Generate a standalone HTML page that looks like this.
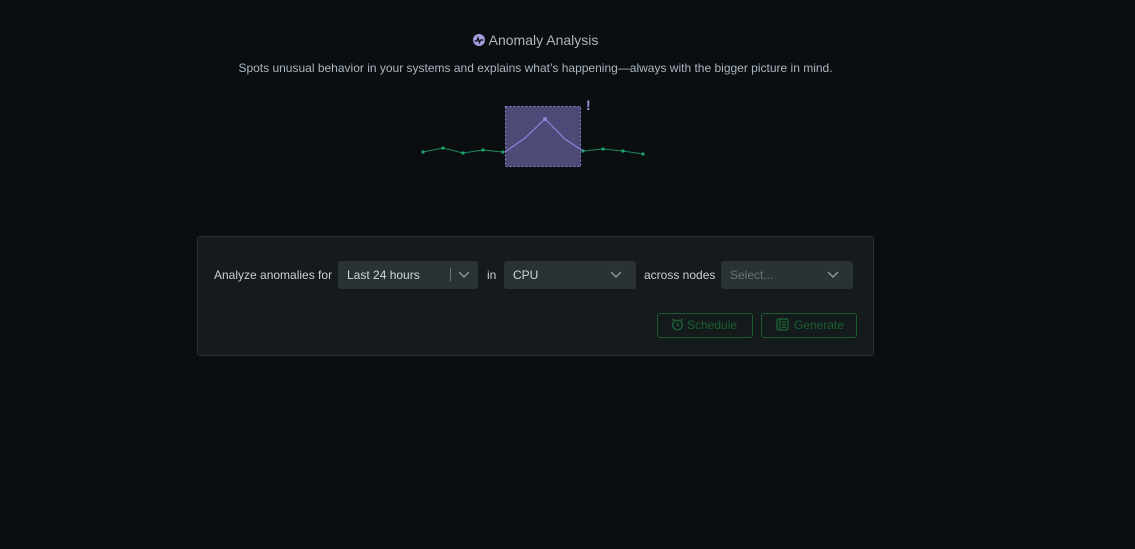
<!DOCTYPE html>
<html><head><style>
body{margin:0;width:1135px;height:549px;background:#0b0e10;font-family:"Liberation Sans",sans-serif;position:relative;overflow:hidden;color:#c5ced6}
.t{position:absolute;left:0;width:1071px;text-align:center}
.panel{position:absolute;left:197px;top:236px;width:675px;height:118px;background:#151a1c;border:1px solid #2a3032;border-radius:3px}
.sel{position:absolute;top:261px;height:28px;background:#2a3234;border-radius:3px;font-size:12px;line-height:28px;color:#d0d7dc;box-sizing:border-box;padding-left:9px}
.lbl{position:absolute;top:261px;line-height:28px;font-size:12px;color:#c8d0d6}
.btn{position:absolute;top:313px;height:25px;border:1px solid #1d5a30;border-radius:3px;box-sizing:border-box;color:#1e6a36;font-size:12px;line-height:23px}
</style></head><body>
<div class="t" style="top:32px;font-size:14px;color:#a9b5bf">
<svg width="12" height="12" viewBox="0 0 12 12" style="vertical-align:-1px;margin-right:4px"><circle cx="6" cy="6" r="6" fill="#a79ee0"/><path d="M1.5 7 H4 L5 4 L6.5 8.5 L7.5 6 H10.5" stroke="#0b0e10" stroke-width="1.3" fill="none"/></svg>Anomaly Analysis</div>
<div class="t" style="top:61px;font-size:12px;color:#a9b5bf">Spots unusual behavior in your systems and explains what’s happening—always with the bigger picture in mind.</div>
<svg style="position:absolute;left:0;top:0" width="1135" height="200">
<rect x="505.5" y="106.5" width="75" height="60" fill="#4e4a78" stroke="#8d86d0" stroke-dasharray="2 2"/>
<polyline points="423,152 443,148 463,153 483,150 503,152" fill="none" stroke="#1e8a5c" stroke-width="1"/>
<polyline points="583,151 603,149 623,151 643,154" fill="none" stroke="#1e8a5c" stroke-width="1"/>
<g fill="#22a36b"><circle cx="423" cy="152" r="1.6"/><circle cx="443" cy="148" r="1.6"/><circle cx="463" cy="153" r="1.6"/><circle cx="483" cy="150" r="1.6"/><circle cx="503" cy="152" r="1.6"/><circle cx="583" cy="151" r="1.6"/><circle cx="603" cy="149" r="1.6"/><circle cx="623" cy="151" r="1.6"/><circle cx="643" cy="154" r="1.6"/></g>
<polyline points="505,152 525,138 545,119 565,139 583,151" fill="none" stroke="#8c84d6" stroke-width="1.2"/>
<circle cx="545" cy="119" r="2" fill="#8c84d6"/>
<text x="586" y="110" font-size="14" font-weight="bold" fill="#9d95e0" font-family="Liberation Sans">!</text>
</svg>
<div class="panel"></div>
<div class="lbl" style="left:214px">Analyze anomalies for</div>
<div class="sel" style="left:338px;width:140px">Last 24 hours<span style="position:absolute;left:112px;top:7px;width:1px;height:13px;background:#6a7478"></span><svg style="position:absolute;right:8px;top:10px" width="12" height="8"><path d="M1 1 L6 6 L11 1" stroke="#8a9499" stroke-width="1.5" fill="none"/></svg></div>
<div class="lbl" style="left:487px">in</div>
<div class="sel" style="left:504px;width:132px">CPU<svg style="position:absolute;right:14px;top:10px" width="12" height="8"><path d="M1 1 L6 6 L11 1" stroke="#8a9499" stroke-width="1.5" fill="none"/></svg></div>
<div class="lbl" style="left:644px">across nodes</div>
<div class="sel" style="left:721px;width:132px;color:#6a7478">Select...<svg style="position:absolute;right:14px;top:10px" width="12" height="8"><path d="M1 1 L6 6 L11 1" stroke="#8a9499" stroke-width="1.5" fill="none"/></svg></div>
<div class="btn" style="left:657px;width:96px;padding-left:13px;color:#1b6030"><svg width="13" height="13" viewBox="0 0 13 13" style="vertical-align:-2px;margin-right:3px"><circle cx="6.5" cy="7" r="4.8" stroke="#1e6a36" stroke-width="1.2" fill="none"/><path d="M6.5 4.5V7L8 8.3M1 2.5L3 1M12 2.5L10 1" stroke="#1e6a36" stroke-width="1.2" fill="none"/></svg>Schedule</div>
<div class="btn" style="left:761px;width:96px;padding-left:14px;color:#1b6030"><svg width="13" height="13" viewBox="0 0 13 13" style="vertical-align:-2px;margin-right:5px"><rect x="1" y="1" width="11" height="11" rx="1.5" stroke="#1e6a36" stroke-width="1.2" fill="none"/><path d="M4 1V12M6 4H10M6 6.5H10M6 9H10" stroke="#1e6a36" stroke-width="1.2"/></svg>Generate</div>
</body></html>
